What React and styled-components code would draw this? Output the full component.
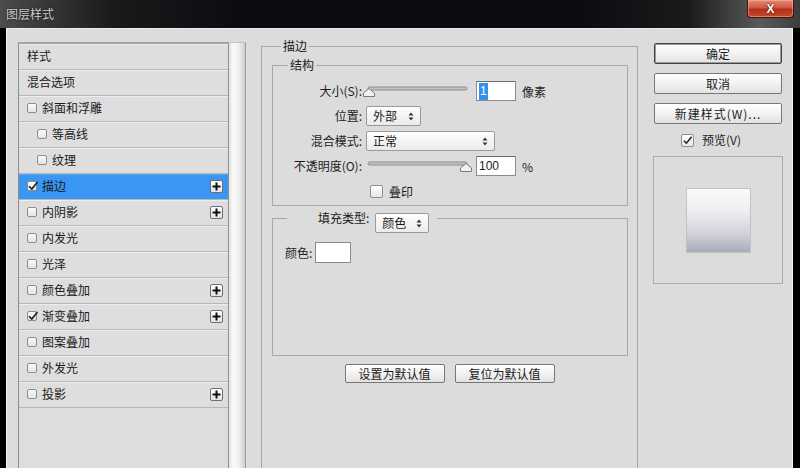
import React from 'react';
import styled, { createGlobalStyle } from 'styled-components';

const GlobalStyle = createGlobalStyle`
  html, body {
    margin: 0;
    padding: 0;
    background: #000;
  }
  body {
    font-family: "Noto Sans CJK SC", "Liberation Sans", sans-serif;
    font-size: 12px;
    color: #1c1c1c;
  }
  * {
    box-sizing: border-box;
  }
`;

const Window = styled.div`
  width: 800px;
  height: 468px;
  overflow: hidden;
  background: #000;
  display: flex;
  flex-direction: column;
`;

const TitleBar = styled.div`
  height: 28px;
  flex: none;
  display: flex;
  align-items: center;
  justify-content: space-between;
  padding: 0 7px 0 6px;
  background: linear-gradient(90deg, #4c4c4c 0%, #1a1a1c 14%, #0b0c10 30%, #0b0c10 72%, #1a1a1c 86%, #5a5a5a 95%, #3c3c3c 100%);
`;

const TitleText = styled.span`
  color: #cfcfcf;
  font-size: 12px;
  line-height: 14px;
  text-shadow: 0 0 2px #000;
`;

const CloseButton = styled.div`
  align-self: flex-start;
  width: 47px;
  height: 18px;
  margin-right: -1px;
  border: 1px solid #4a1208;
  border-top: none;
  border-radius: 0 0 4px 4px;
  background: linear-gradient(#e58a78 0%, #d0583f 45%, #b3301a 55%, #c4482c 100%);
  box-shadow: inset 0 0 0 1px rgba(255, 200, 190, 0.45);
  display: flex;
  align-items: center;
  justify-content: center;
  color: #fff;
  font-family: "Liberation Sans", sans-serif;
  font-weight: 700;
  font-size: 12px;
  text-shadow: 0 0 2px #5a0d00, 0 0 1px #5a0d00;
`;

const Body = styled.div`
  flex: 1;
  margin: 0 7px 0 6px;
  background: #dcdcdc;
  border-left: 1px solid #f6f6f6;
  border-right: 1px solid #f6f6f6;
  border-top: 1px solid #ececec;
  display: flex;
  align-items: flex-start;
  padding: 10px 8px 0 11px;
  overflow: hidden;
`;

const LeftColumn = styled.div`
  display: flex;
  margin-top: 3px;
  height: 440px;
`;

const StyleList = styled.div`
  width: 211px;
  height: 100%;
  border: 1px solid #8e8e8e;
  border-top: 2px solid #a4a4a4;
  background: #dddddd;
`;

const ListRow = styled.div`
  height: 26px;
  display: flex;
  align-items: center;
  padding: 0 5px 1px ${p => 8 + (p.$indent ? 10 : 0)}px;
  gap: 5px;
  background: ${p => (p.$selected ? '#3996f2' : '#dedede')};
  border-bottom: 1px solid #b7b7b7;
  box-shadow: inset 0 1px 0 ${p => (p.$selected ? '#5aa8f5' : '#ededed')};
  color: #1a1a1a;
  line-height: 14px;
`;

const ListCheck = styled.span`
  width: 10px;
  height: 10px;
  flex: none;
  border: 1px solid #8d8d8d;
  border-radius: 2px;
  background: linear-gradient(#fbfbfb, #e4e4e4);
  position: relative;
  svg {
    position: absolute;
    left: -1px;
    top: -2px;
  }
`;

const PlusBox = styled.span`
  margin-left: auto;
  width: 13px;
  height: 13px;
  flex: none;
  border: 1px solid #6f6f6f;
  border-radius: 2px;
  background: linear-gradient(#ffffff, #e4e4e4);
  display: flex;
  align-items: center;
  justify-content: center;
`;

const ScrollTrack = styled.div`
  width: 17px;
  height: 100%;
  border-right: 1px solid #9c9c9c;
  border-top: 1px solid #c4c4c4;
  background: linear-gradient(90deg, #e4e4e4 0%, #fbfbfb 30%, #ececec 65%, #cdcdcd 100%);
`;

const MiddleColumn = styled.div`
  margin-left: 15px;
  width: 377px;
`;

const Group = styled.fieldset`
  margin: 0;
  padding: 0;
  min-width: 0;
  border: 1px solid #a8a8a8;
`;

const OuterGroup = styled(Group)`
  height: 440px;
`;

const InnerGroup = styled(Group)`
  margin: 5px 9px 0 10px;
`;

const FillGroup = styled(Group)`
  margin: 5px 9px 0 10px;
  height: 145px;
`;

const Legend = styled.legend`
  padding: 0 2px;
  margin-left: ${p => p.$offset}px;
  font-size: 12px;
  line-height: 14px;
  color: #1a1a1a;
`;

const FillLegend = styled.legend`
  height: 14px;
  margin-left: 14px;
  padding: 0 8px 0 31px;
  display: flex;
  align-items: flex-start;
  gap: 6px;
  line-height: 14px;
  color: #1a1a1a;
`;

const FormGrid = styled.div`
  display: grid;
  grid-template-columns: 89px 1fr;
  grid-auto-rows: 20px;
  row-gap: 5px;
  align-items: center;
  padding: 9px 0 4px 0;
`;

const Label = styled.span`
  text-align: right;
  white-space: nowrap;
  line-height: 14px;
`;

const Controls = styled.div`
  display: flex;
  align-items: center;
  height: 20px;
  padding-left: ${p => p.$pad || 0}px;
  gap: ${p => p.$gap || 0}px;
`;

const NumberBox = styled.div`
  width: 40px;
  height: 20px;
  margin: 0 6px 0 2px;
  border: 1px solid #8c8c8c;
  border-top-color: #6c6c6c;
  background: #fff;
  display: flex;
  align-items: center;
  padding-left: 2px;
  font-family: "Liberation Sans", sans-serif;
  font-size: 12px;
`;

const Highlight = styled.span`
  background: #3591f0;
  color: #fff;
  padding: 1px 1px;
  line-height: 15px;
`;

const Select = styled.div`
  width: ${p => p.$w}px;
  height: 20px;
  flex: none;
  margin-top: ${p => p.$top || 0}px;
  border: 1px solid #9a9a9a;
  border-radius: 2px;
  background: linear-gradient(#fdfdfd, #ebebeb);
  display: flex;
  align-items: center;
  justify-content: space-between;
  padding: 0 6px 0 6px;
  line-height: 14px;
  color: #1a1a1a;
`;

const CheckBox = styled.span`
  width: 13px;
  height: 13px;
  flex: none;
  border: 1px solid #8f8f8f;
  border-radius: 2px;
  background: linear-gradient(#ffffff, #e6e6e6);
  display: flex;
  align-items: center;
  justify-content: center;
`;

const ColorRow = styled.div`
  display: flex;
  align-items: center;
  gap: 3px;
  padding: 17px 0 0 12px;
  line-height: 14px;
`;

const Swatch = styled.div`
  width: 36px;
  height: 21px;
  border: 1px solid #8a8a8a;
  background: #fff;
`;

const ButtonRow = styled.div`
  display: flex;
  justify-content: center;
  gap: 10px;
  margin-top: 8px;
`;

const Button = styled.div`
  width: ${p => p.$w}px;
  height: ${p => p.$h}px;
  border: 1px solid ${p => (p.$primary ? '#444' : '#777')};
  border-radius: 2px;
  background: linear-gradient(#ffffff 0%, #f2f2f2 50%, #e2e2e2 100%);
  box-shadow: ${p => (p.$primary ? 'inset 0 0 0 1px #9a9a9a' : 'none')};
  display: flex;
  align-items: center;
  justify-content: center;
  line-height: 14px;
  color: #1a1a1a;
  letter-spacing: ${p => p.$spacing || 0}px;
`;

const RightColumn = styled.div`
  margin: 4px 0 0 15px;
  width: 130px;
  display: flex;
  flex-direction: column;
  align-items: center;
  gap: 9px;
`;

const PreviewToggle = styled.div`
  display: flex;
  align-items: center;
  gap: 8px;
  height: 14px;
  line-height: 14px;
  margin-left: -14px;
`;

const PreviewBox = styled.div`
  width: 130px;
  height: 128px;
  border: 1px solid #acacac;
  background: #dcdcdc;
  display: flex;
  align-items: center;
  justify-content: center;
`;

const PreviewSwatch = styled.div`
  width: 65px;
  height: 65px;
  border: 1px solid #c2c2c6;
  background: linear-gradient(#f9f9fb 0%, #eeeef1 35%, #d2d3da 70%, #a9abb9 100%);
`;

const CheckMark = ({ size = 12 }) => (
  <svg width={size} height={size} viewBox="0 0 12 12">
    <path d="M2 6.2 L4.8 9 L10.5 2" fill="none" stroke="#1c1c1c" strokeWidth="1.6" />
  </svg>
);

const PlusIcon = () => (
  <svg width="9" height="9" viewBox="0 0 9 9">
    <path d="M4.5 0.5 V8.5 M0.5 4.5 H8.5" stroke="#111" strokeWidth="2" />
  </svg>
);

const UpDown = () => (
  <svg width="6" height="9" viewBox="0 0 6 9">
    <path d="M3 0.5 L5.5 3.5 H0.5 Z M3 8.5 L5.5 5.5 H0.5 Z" fill="#333" />
  </svg>
);

const Slider = ({ end }) => {
  const cx = end ? 104 : 7;
  return (
    <svg width="112" height="20" viewBox="0 0 112 20">
      <rect x="6" y="6" width="99" height="3" rx="1.5" fill="#c2c2c2" stroke="#8d8d8d" strokeWidth="1" />
      <path
        d={`M${cx - 5.5} 15.5 L${cx - 5.5} 12 L${cx} 7.5 L${cx + 5.5} 12 L${cx + 5.5} 15.5 Z`}
        fill="#f2f2f2"
        stroke="#7b7b7b"
        strokeWidth="1"
        strokeLinejoin="round"
      />
    </svg>
  );
};

const styleItems = [
  { name: '样式', plain: true },
  { name: '混合选项', plain: true },
  { name: '斜面和浮雕' },
  { name: '等高线', indent: true },
  { name: '纹理', indent: true },
  { name: '描边', checked: true, plus: true, selected: true },
  { name: '内阴影', plus: true },
  { name: '内发光' },
  { name: '光泽' },
  { name: '颜色叠加', plus: true },
  { name: '渐变叠加', checked: true, plus: true },
  { name: '图案叠加' },
  { name: '外发光' },
  { name: '投影', plus: true },
];

export default function App() {
  return (
    <>
      <GlobalStyle />
      <Window>
        <TitleBar>
          <TitleText>图层样式</TitleText>
          <CloseButton>X</CloseButton>
        </TitleBar>

        <Body>
          <LeftColumn>
            <StyleList>
              {styleItems.map(item => (
                <ListRow key={item.name} $indent={item.indent} $selected={item.selected}>
                  {!item.plain && (
                    <ListCheck>{item.checked && <CheckMark size={12} />}</ListCheck>
                  )}
                  <span>{item.name}</span>
                  {item.plus && (
                    <PlusBox>
                      <PlusIcon />
                    </PlusBox>
                  )}
                </ListRow>
              ))}
            </StyleList>
            <ScrollTrack />
          </LeftColumn>

          <MiddleColumn>
            <OuterGroup>
              <Legend $offset={19}>描边</Legend>

              <InnerGroup>
                <Legend $offset={15}>结构</Legend>
                <FormGrid>
                  <Label>大小(S):</Label>
                  <Controls>
                    <Slider />
                    <NumberBox>
                      <Highlight>1</Highlight>
                    </NumberBox>
                    <span>像素</span>
                  </Controls>

                  <Label>位置:</Label>
                  <Controls $pad={4}>
                    <Select $w={55}>
                      外部 <UpDown />
                    </Select>
                  </Controls>

                  <Label>混合模式:</Label>
                  <Controls $pad={4}>
                    <Select $w={129}>
                      正常 <UpDown />
                    </Select>
                  </Controls>

                  <Label>不透明度(O):</Label>
                  <Controls>
                    <Slider end />
                    <NumberBox>100</NumberBox>
                    <span>%</span>
                  </Controls>

                  <span />
                  <Controls $pad={8} $gap={6}>
                    <CheckBox />
                    <span>叠印</span>
                  </Controls>
                </FormGrid>
              </InnerGroup>

              <FillGroup>
                <FillLegend>
                  <span>填充类型:</span>
                  <Select $w={54} $top={2}>
                    颜色 <UpDown />
                  </Select>
                </FillLegend>
                <ColorRow>
                  <span>颜色:</span>
                  <Swatch />
                </ColorRow>
              </FillGroup>

              <ButtonRow>
                <Button $w={100} $h={19}>设置为默认值</Button>
                <Button $w={100} $h={19}>复位为默认值</Button>
              </ButtonRow>
            </OuterGroup>
          </MiddleColumn>

          <RightColumn>
            <Button $w={128} $h={21} $primary>确定</Button>
            <Button $w={128} $h={21}>取消</Button>
            <Button $w={128} $h={21} $spacing={1}>新建样式(W)...</Button>
            <PreviewToggle>
              <CheckBox>
                <CheckMark size={11} />
              </CheckBox>
              <span>预览(V)</span>
            </PreviewToggle>
            <PreviewBox>
              <PreviewSwatch />
            </PreviewBox>
          </RightColumn>
        </Body>
      </Window>
    </>
  );
}
